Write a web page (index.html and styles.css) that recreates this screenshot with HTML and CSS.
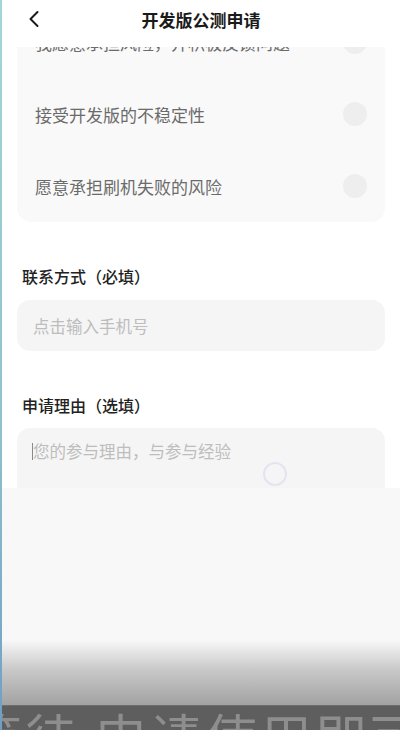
FILE: index.html
```html
<!DOCTYPE html>
<html>
<head>
    <meta charset="utf-8">
    <link rel="stylesheet" href="styles.css">
</head>
<body>
    <div class="screen">
        <div class="header">
            <svg class="back-icon" width="16" height="18" viewBox="0 0 16 18">
                <path d="M10.5 2 L3.5 9 L10.5 16" fill="none" stroke="#1a1a1a" stroke-width="2" stroke-linecap="round" stroke-linejoin="round"/>
            </svg>
            <h1 class="title">开发版公测申请</h1>
        </div>

        <div class="scroller">
            <div class="agree-card">
                <div class="agree-row">
                    <span>我愿意承担风险，并积极反馈问题</span>
                    <span class="radio"></span>
                </div>
                <div class="agree-row">
                    <span>接受开发版的不稳定性</span>
                    <span class="radio"></span>
                </div>
                <div class="agree-row">
                    <span>愿意承担刷机失败的风险</span>
                    <span class="radio"></span>
                </div>
            </div>

            <div class="field-label">联系方式（必填）</div>
            <div class="input-box">
                <span class="placeholder">点击输入手机号</span>
            </div>

            <div class="field-label">申请理由（选填）</div>
            <div class="textarea-box">
                <span class="caret"></span>
                <span class="placeholder">您的参与理由，与参与经验</span>
                <span class="spinner"></span>
            </div>
        </div>

        <div class="player-panel">
            <div class="panel-fill"></div>
            <div class="panel-fade"></div>
            <div class="subtitle">等待 申请使用即可</div>
        </div>
    </div>
</body>
</html>
```

FILE: styles.css
```css
html, body {
    margin: 0;
    padding: 0;
    background-color: #fff;
}

body {
    font-family: "Noto Sans CJK SC", "Noto Sans", sans-serif;
    color: #222;
}

.screen {
    width: 398px;
    height: 730px;
    overflow: hidden;
    display: flex;
    flex-direction: column;
    border-left: 2px solid;
    border-image: linear-gradient(#a3d5da, #8fc0cc 60%, #6f9ec4) 1;
}

.header {
    height: 47px;
    flex-shrink: 0;
    display: flex;
    align-items: center;
    justify-content: center;
    position: relative;
    background-color: #fff;
    z-index: 2;
}

.back-icon {
    position: absolute;
    left: 25px;
    top: 10px;
}

.title {
    margin: 0 0 9px 0;
    font-size: 17px;
    font-weight: bold;
    color: #1a1a1a;
}

.scroller {
    height: 441px;
    flex-shrink: 0;
    overflow: hidden;
    padding: 0 15px;
}

.agree-card {
    margin-top: -41px;
    background-color: #f9f9f9;
    border-radius: 14px;
}

.agree-row {
    height: 72px;
    display: flex;
    align-items: center;
    justify-content: space-between;
    padding: 0 18px;
    font-size: 17px;
    color: #6b6b6b;
}

.radio {
    width: 24px;
    height: 24px;
    border-radius: 50%;
    background-color: #eeeeee;
}

.field-label {
    margin: 44px 0 0 5px;
    height: 20px;
    line-height: 20px;
    font-size: 16px;
    font-weight: 500;
    color: #222;
}

.input-box {
    margin-top: 14px;
    height: 51px;
    background-color: #f5f5f5;
    border-radius: 13px;
    display: flex;
    align-items: center;
    padding: 0 16px;
}

.placeholder {
    font-size: 16.5px;
    color: #bdbdbd;
}

.textarea-box {
    margin-top: 13px;
    height: 120px;
    background-color: #f5f5f5;
    border-radius: 13px;
    padding: 12px 16px 0 16px;
    position: relative;
    display: flex;
    align-items: flex-start;
}

.textarea-box .placeholder {
    line-height: 22px;
}

.caret {
    width: 1px;
    height: 17px;
    margin: 3px 0 0 -1px;
    background-color: #8a8a8a;
}

.spinner {
    position: absolute;
    left: 246px;
    top: 34px;
    width: 20px;
    height: 20px;
    border: 2px solid #e4e4f1;
    border-radius: 50%;
}

.player-panel {
    flex: 1;
    display: flex;
    flex-direction: column;
    background-color: #f8f8f8;
}

.panel-fill {
    height: 152px;
}

.panel-fade {
    height: 65px;
    background: linear-gradient(#f8f8f8, #c9c9c9 45%, #a2a2a2);
}

.subtitle {
    height: 25px;
    overflow: hidden;
    background-color: #5e5e5e;
    border-top: 1px solid #6e6e6e;
    color: #8e8e8e;
    font-size: 52px;
    line-height: 60px;
    white-space: nowrap;
    text-indent: -32px;
    letter-spacing: 3px;
}
```
